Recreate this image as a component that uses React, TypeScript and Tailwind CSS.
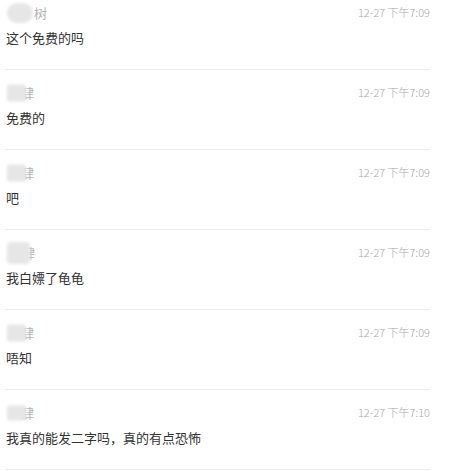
const comments = [
  { name: "树", text: "这个免费的吗", time: "12-27 下午7:09", blob: "w-[26px] h-[20px] rounded-full", offset: "ml-[26px]" },
  { name: "肆", text: "免费的", time: "12-27 下午7:09", blob: "w-[19px] h-[17px] rounded-[2px]", offset: "ml-[13px]" },
  { name: "肆", text: "吧", time: "12-27 下午7:09", blob: "w-[19px] h-[17px] rounded-[2px]", offset: "ml-[13px]" },
  { name: "肆", text: "我白嫖了龟龟", time: "12-27 下午7:09", blob: "w-[23px] h-[22px] rounded-[4px]", offset: "ml-[14px]" },
  { name: "肆", text: "唔知", time: "12-27 下午7:09", blob: "w-[19px] h-[17px] rounded-[2px]", offset: "ml-[13px]" },
  { name: "肆", text: "我真的能发二字吗，真的有点恐怖", time: "12-27 下午7:10", blob: "w-[19px] h-[15px] rounded-[2px]", offset: "ml-[13px]" },
];

function Name({ name, blob, offset }: { name: string; blob: string; offset: string }) {
  return (
    <div className="relative flex h-[18px] items-center pl-[3px] text-[13px] text-[#b4b4b4]">
      <span className={offset}>{name}</span>
      {/* blurred nickname mask, lies over the start of the name */}
      <span className={`absolute left-[2px] top-1/2 -translate-y-1/2 bg-[#e6e6e6] blur-[1.5px] ${blob}`} />
    </div>
  );
}

export default function App() {
  return (
    <div
      className="min-h-screen bg-white overflow-hidden"
      style={{ fontFamily: '"Noto Sans CJK SC", "Microsoft YaHei", sans-serif' }}
    >
      <ul className="-mt-[10px] ml-[5px] w-[425px]">
        {comments.map((c, i) => (
          <li key={i} className="border-b border-[#ececec] pt-[14px] pb-[21px]">
            <div className="flex items-center justify-between">
              <Name name={c.name} blob={c.blob} offset={c.offset} />
              <span className="-mt-[3px] text-[11px] font-light leading-[18px] text-[#a8a8a8]">{c.time}</span>
            </div>
            <p className="mt-[6px] pl-[1px] text-[13px] leading-[20px] text-[#333]">{c.text}</p>
          </li>
        ))}
      </ul>
    </div>
  );
}
